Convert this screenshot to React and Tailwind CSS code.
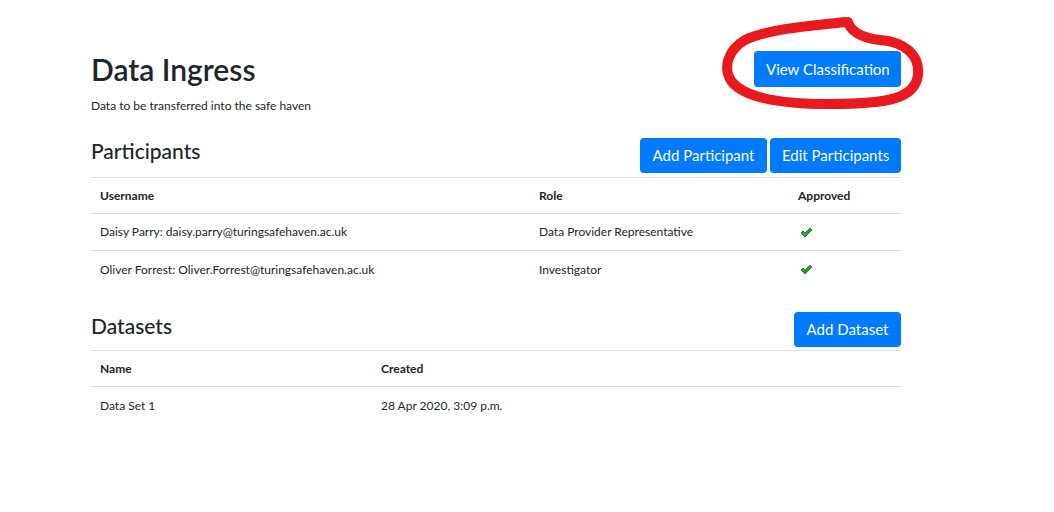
import React from 'react'

const PARTICIPANTS = [
  { user: 'Daisy Parry: daisy.parry@turingsafehaven.ac.uk', role: 'Data Provider Representative' },
  { user: 'Oliver Forrest: Oliver.Forrest@turingsafehaven.ac.uk', role: 'Investigator' },
]

const DATASETS = [{ name: 'Data Set 1', created: '28 Apr 2020, 3:09 p.m.' }]

function Check() {
  return (
    <svg width="13" height="11" viewBox="0 0 13 11">
      <path d="M1 6 L3 4 L5 6 L10 1 L12 3 L5 10 Z" fill="#2f9e35" stroke="#1d6b22" strokeWidth="0.8" strokeLinejoin="round" />
    </svg>
  )
}

function Btn({ children, className = '' }) {
  return (
    <button className={`bg-[#007bff] text-white text-[15px] rounded-[4px] px-[12px] leading-none whitespace-nowrap ${className}`}>
      {children}
    </button>
  )
}

export default function App() {
  return (
    <div className="min-h-screen bg-white font-['Lato',sans-serif] text-[#212529]">
      <div className="w-[810px] ml-[91px]">

        {/* header */}
        <div className="flex justify-between items-start pt-[51px]">
          <div>
            <h1 className="text-[30px] font-semibold leading-none mt-[3px]">Data Ingress</h1>
            <p className="text-[12px] mt-[13px]">Data to be transferred into the safe haven</p>
          </div>
          <div className="relative">
            <Btn className="h-[36px] w-[147px]">View Classification</Btn>
            <svg className="absolute left-[-39px] top-[-41px] pointer-events-none" width="215" height="105" viewBox="0 0 215 105">
              <path
                d="M 133 12 C 135 20, 145 28, 165 30 C 190 32, 205 45, 203 65 C 200 88, 175 94, 115 94 C 65 94, 30 88, 17 72 C 7 58, 13 40, 30 30 C 55 18, 105 15, 130 12"
                fill="none" stroke="#e8191f" strokeWidth="10" strokeLinecap="round" strokeLinejoin="round"
              />
            </svg>
          </div>
        </div>

        {/* participants */}
        <div className="flex justify-between items-end mt-[23px] pb-[4px] border-b border-[#dee2e6]">
          <h2 className="text-[21px] font-medium leading-none mb-[12px]">Participants</h2>
          <div className="flex gap-[3px]">
            <Btn className="h-[35px] w-[127px]">Add Participant</Btn>
            <Btn className="h-[35px] w-[131px]">Edit Participants</Btn>
          </div>
        </div>
        <div className="text-[12px]">
          <div className="grid grid-cols-[439px_259px_1fr] h-[36px] items-center px-[9px] font-bold border-b border-[#dee2e6]">
            <span>Username</span><span>Role</span><span>Approved</span>
          </div>
          {PARTICIPANTS.map((p, i) => (
            <div key={p.user} className={`grid grid-cols-[439px_259px_1fr] h-[37px] items-center px-[9px] ${i === 0 ? 'border-b border-[#dee2e6]' : ''}`}>
              <span>{p.user}</span><span>{p.role}</span><span className="pl-[2px]"><Check /></span>
            </div>
          ))}
        </div>

        {/* datasets */}
        <div className="flex justify-between items-end mt-[24px] pb-[3px] border-b border-[#dee2e6]">
          <h2 className="text-[21px] font-medium leading-none mb-[11px]">Datasets</h2>
          <Btn className="h-[35px] w-[107px]">Add Dataset</Btn>
        </div>
        <div className="text-[12px]">
          <div className="grid grid-cols-[281px_1fr] h-[36px] items-center px-[9px] font-bold border-b border-[#dee2e6]">
            <span>Name</span><span>Created</span>
          </div>
          {DATASETS.map(d => (
            <div key={d.name} className="grid grid-cols-[281px_1fr] h-[37px] items-center px-[9px]">
              <span>{d.name}</span><span>{d.created}</span>
            </div>
          ))}
        </div>
      </div>
    </div>
  )
}
